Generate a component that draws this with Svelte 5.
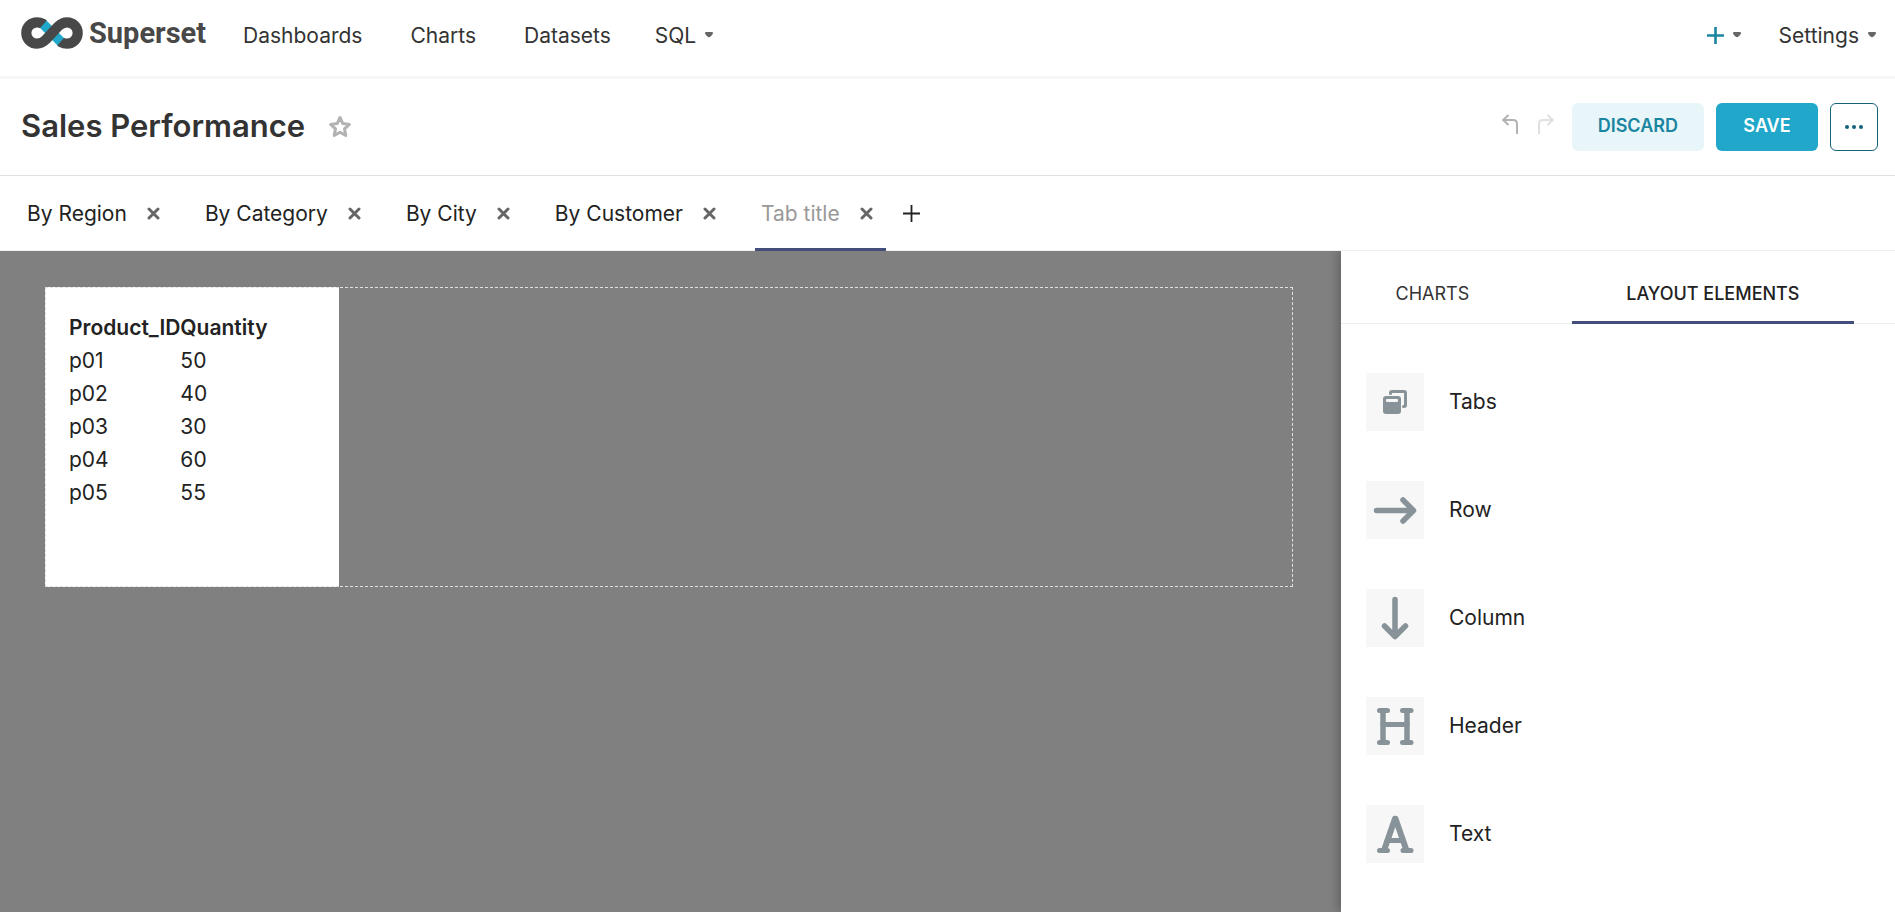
<script>
  const links = ['Dashboards', 'Charts', 'Datasets'];
  const tabs = ['By Region', 'By Category', 'By City', 'By Customer', 'Tab title'];
  const elements = ['Tabs', 'Row', 'Column', 'Header', 'Text'];
  const rows = [
    ['p01', 50],
    ['p02', 40],
    ['p03', 30],
    ['p04', 60],
    ['p05', 55]
  ];
  let active = $state(4);
  let panel = $state(1);
</script>

{#snippet caret()}
  <svg class="caret" width="8" height="6" viewBox="0 0 8 6" aria-hidden="true">
    <path d="M1 0h6q1 0 1 1c0 1-1 2-2.200 3.300Q4 6.200 2.200 4.300C1 3 0 2 0 1q0-1 1-1z" fill="#666" />
  </svg>
{/snippet}

<div class="app">
  <header class="navbar">
    <a class="brand" href="#home">
      <svg width="62" height="32" viewBox="0 0 62 32" aria-hidden="true">
        <path d="M21 6 41 26" fill="none" stroke="#20a7c9" stroke-width="9.800" />
        <path
          d="M22.300 7.300 21.500 6.600C20 5.700 18 5.300 16 5.300a10.700 10.700 0 0 0 0 21.400c4 0 6.500-1.700 9-4.200L37 9.500c2.500-2.500 5-4.200 9-4.200a10.700 10.700 0 0 1 0 21.400c-2 0-4-.4-5.500-1.300L39.700 24.700"
          fill="none" stroke="#484848" stroke-width="10.200" />
      </svg>
      <span>Superset</span>
    </a>
    <nav class="menu">
      {#each links as link}
        <a href="#{link}">{link}</a>
      {/each}
      <button class="drop sql">SQL {@render caret()}</button>
    </nav>
    <div class="right">
      <button class="drop" aria-label="New">
        <svg width="17" height="17" viewBox="0 0 17 17" aria-hidden="true">
          <path d="M8.500 0v17M0 8.500h17" stroke="#1a85a0" stroke-width="2.600" />
        </svg>
        {@render caret()}
      </button>
      <button class="drop">Settings {@render caret()}</button>
    </div>
  </header>

  <section class="titlebar">
    <h1>Sales Performance</h1>
    <button class="icon star" aria-label="Favorite">
      <svg width="24" height="23" viewBox="0 0 24 23" aria-hidden="true">
        <path d="M12 2.500l2.800 6.100 6.600.8-4.900 4.500 1.300 6.600L12 17.200l-5.800 3.300 1.300-6.600-4.900-4.500 6.600-.8z"
          fill="none" stroke="#b2b2b2" stroke-width="3" stroke-linejoin="round" />
      </svg>
    </button>
    <div class="actions">
      <button class="icon" aria-label="Undo">
        <svg width="17" height="20" viewBox="0 0 17 20" aria-hidden="true">
          <path d="M6.500 1 1.200 6l5.300 5M1.500 6H11q4 0 4 4v10" fill="none" stroke="#b2b2b2" stroke-width="2" />
        </svg>
      </button>
      <button class="icon" aria-label="Redo">
        <svg width="17" height="20" viewBox="0 0 17 20" aria-hidden="true">
          <path d="M10.500 1l5.300 5-5.300 5M15.500 6H6q-4 0-4 4v10" fill="none" stroke="#e0e0e0" stroke-width="2" />
        </svg>
      </button>
      <button class="btn discard">DISCARD</button>
      <button class="btn save">SAVE</button>
      <button class="btn more" aria-label="More options">
        <svg width="18" height="4" viewBox="0 0 18 4" aria-hidden="true">
          <g fill="#156378"><circle cx="2" cy="2" r="2" /><circle cx="9" cy="2" r="2" /><circle cx="16" cy="2" r="2" /></g>
        </svg>
      </button>
    </div>
  </section>

  <div class="tabs">
    {#each tabs as tab, i}
      <div class="tab" class:active={active === i}>
        <button class="name" class:untitled={tab === 'Tab title'} onclick={() => (active = i)}>{tab}</button>
        <button class="icon" aria-label="Remove {tab}">
          <svg width="13" height="13" viewBox="0 0 13 13" aria-hidden="true">
            <path d="M2 2l9 9M11 2l-9 9" stroke="#666" stroke-width="3" stroke-linecap="round" />
          </svg>
        </button>
      </div>
    {/each}
    <button class="icon add" aria-label="Add tab">
      <svg width="17" height="17" viewBox="0 0 17 17" aria-hidden="true">
        <path d="M8.500 0v17M0 8.500h17" stroke="#222" stroke-width="1.800" />
      </svg>
    </button>
  </div>

  <div class="body">
    <main>
      <div class="grid-row">
        <div class="card">
          <table>
            <thead><tr><th>Product_ID</th><th>Quantity</th></tr></thead>
            <tbody>
              {#each rows as [id, qty]}
                <tr><td>{id}</td><td>{qty}</td></tr>
              {/each}
            </tbody>
          </table>
        </div>
      </div>
    </main>

    <aside>
      <div class="panel-tabs">
        <button class:active={panel === 0} onclick={() => (panel = 0)}>CHARTS</button>
        <button class:active={panel === 1} onclick={() => (panel = 1)}>LAYOUT ELEMENTS</button>
      </div>
      <ul>
        {#each elements as name}
          <li>
            <svg width="58" height="58" viewBox="0 0 58 58" aria-hidden="true"
              fill="none" stroke="#879399" stroke-width="5" stroke-linecap="round" stroke-linejoin="round">
              {#if name === 'Tabs'}
                <path d="M24.500 20.500v-.5q0-1.500 1.500-1.500h12q1.500 0 1.500 1.500v12q0 1.500-1.500 1.500h-.5" stroke-width="3" />
                <rect x="17" y="23" width="18" height="18" rx="3" fill="#879399" stroke="none" />
                <rect x="20" y="26" width="12" height="3" rx="1" fill="#f7f7f7" stroke="none" />
              {:else if name === 'Row'}
                <path d="M10.500 29.500H46M37 19l10.500 10.500L37 40" stroke-width="5.500" />
              {:else if name === 'Column'}
                <path d="M29 10.500V46M18.500 37 29 47.500 39.500 37" stroke-width="5.500" />
              {:else if name === 'Header'}
                <g>
                  <line x1="17" y1="14" x2="17" y2="45" stroke-width="5.500" />
                  <line x1="41" y1="14" x2="41" y2="45" stroke-width="5.500" />
                  <line x1="17" y1="27.500" x2="41" y2="27.500" />
                  <line x1="13.500" y1="13.500" x2="21.500" y2="13.500" />
                  <line x1="36.500" y1="13.500" x2="45" y2="13.500" />
                  <line x1="13.500" y1="45.500" x2="21.500" y2="45.500" />
                  <line x1="36.500" y1="45.500" x2="45" y2="45.500" />
                </g>
              {:else}
                <g>
                  <line x1="29" y1="13.800" x2="18.500" y2="44" stroke-width="6" />
                  <line x1="29.500" y1="13.800" x2="40" y2="44" stroke-width="6" />
                  <line x1="21" y1="35.500" x2="37" y2="35.500" />
                  <line x1="13.500" y1="45.500" x2="21.500" y2="45.500" />
                  <line x1="37" y1="45.500" x2="45" y2="45.500" />
                </g>
              {/if}
            </svg>
            <span>{name}</span>
          </li>
        {/each}
      </ul>
    </aside>
  </div>
</div>

<style>
  :global(body) { margin: 0; }
  .app {
    display: flex;
    flex-direction: column;
    height: 100vh;
    overflow: hidden;
    background: #fff;
    color: #222;
    font: 400 21px/33px Inter, 'Noto Sans', sans-serif;
  }
  button {
    margin: 0;
    padding: 0;
    border: 0;
    background: none;
    font: inherit;
    color: inherit;
    cursor: pointer;
  }
  a { color: inherit; text-decoration: none; }
  svg { display: block; flex: none; }

  .navbar {
    display: flex;
    align-items: center;
    flex: none;
    height: 70px;
    padding: 0 19px 6px 21px;
    border-bottom: 3px solid #f7f7f7;
  }
  .brand {
    display: flex;
    align-items: center;
    gap: 6px;
    padding-bottom: 4px;
    color: #484848;
    font: 700 29px/33px Roboto, sans-serif;
  }
  .brand span { padding-top: 1px; }
  .menu { display: flex; gap: 48px; margin-left: 37px; color: #333; }
  .menu .sql { margin-left: -4px; }
  .drop { display: flex; align-items: center; gap: 9px; color: #333; }
  .right { display: flex; gap: 38px; margin-left: auto; }

  .titlebar {
    display: flex;
    align-items: center;
    flex: none;
    height: 96px;
    padding: 0 17px 0 21px;
    border-bottom: 1px solid #e0e0e0;
  }
  h1 { margin: 0 23px 0 0; padding-bottom: 3px; font-size: 31px; line-height: 36px; font-weight: 600; color: #333; }
  .star { padding-bottom: 2px; }
  .actions { display: flex; align-items: center; gap: 12px; margin-left: auto; }
  .actions .icon { padding-bottom: 6px; margin-right: 6px; }
  .btn {
    display: flex;
    align-items: center;
    justify-content: center;
    box-sizing: border-box;
    height: 48px;
    min-width: 102px;
    padding: 0 26px 2px;
    border-radius: 6px;
    font-size: 18px;
    line-height: 24px;
    font-weight: 600;
  }
  .discard { background: #e9f6f9; color: #1a85a0; }
  .save { background: #20a7c9; color: #fff; }
  .more { width: 48px; min-width: 0; padding: 0; border: 1px solid #156378; }

  .tabs {
    display: flex;
    flex: none;
    gap: 26px;
    height: 74px;
    padding-left: 21px;
    border-bottom: 1px solid #eef0f0;
  }
  .tab {
    display: flex;
    align-items: center;
    gap: 20px;
    margin-bottom: -1px;
    padding: 3px 13px 0 6px;
    border-bottom: 3px solid transparent;
  }
  .tab.active { border-color: #444e7c; }
  .untitled { color: #999; }
  .add { margin-left: -9px; }

  .body { display: flex; flex: 1; min-height: 0; }
  main { flex: 1; padding: 36px 48px 36px 45px; background: #808080; }
  .grid-row { display: flex; height: 298px; border: 1px dashed #e0e0e0; }
  .card {
    box-sizing: border-box;
    width: 294px;
    margin: -1px 0 -1px -1px;
    padding: 23px;
    border: 1px dashed #e0e0e0;
    border-right: 0;
    background: #fff;
  }
  table { border-collapse: collapse; }
  th, td { padding: 0; text-align: left; }
  th { font-weight: 600; }

  aside {
    flex: none;
    width: 554px;
    background: #fff;
    box-shadow: -4px 0 8px rgba(0, 0, 0, 0.2);
    clip-path: inset(0 0 0 -20px);
  }
  .panel-tabs {
    display: flex;
    gap: 48px;
    height: 72px;
    padding-right: 41px;
    border-bottom: 1px solid #eef0f0;
    font-size: 18px;
  }
  .panel-tabs button {
    flex: 1 1 auto;
    margin-bottom: -1px;
    padding-top: 14px;
    border-bottom: 3px solid transparent;
    color: #333;
  }
  .panel-tabs .active { border-color: #444e7c; color: #222; font-weight: 500; }
  ul { display: flex; flex-direction: column; gap: 50px; margin: 0; padding: 49px 25px; list-style: none; }
  li { display: flex; align-items: center; gap: 25px; }
  li svg { background: #f7f7f7; }
  li span { padding-bottom: 2px; }
</style>
